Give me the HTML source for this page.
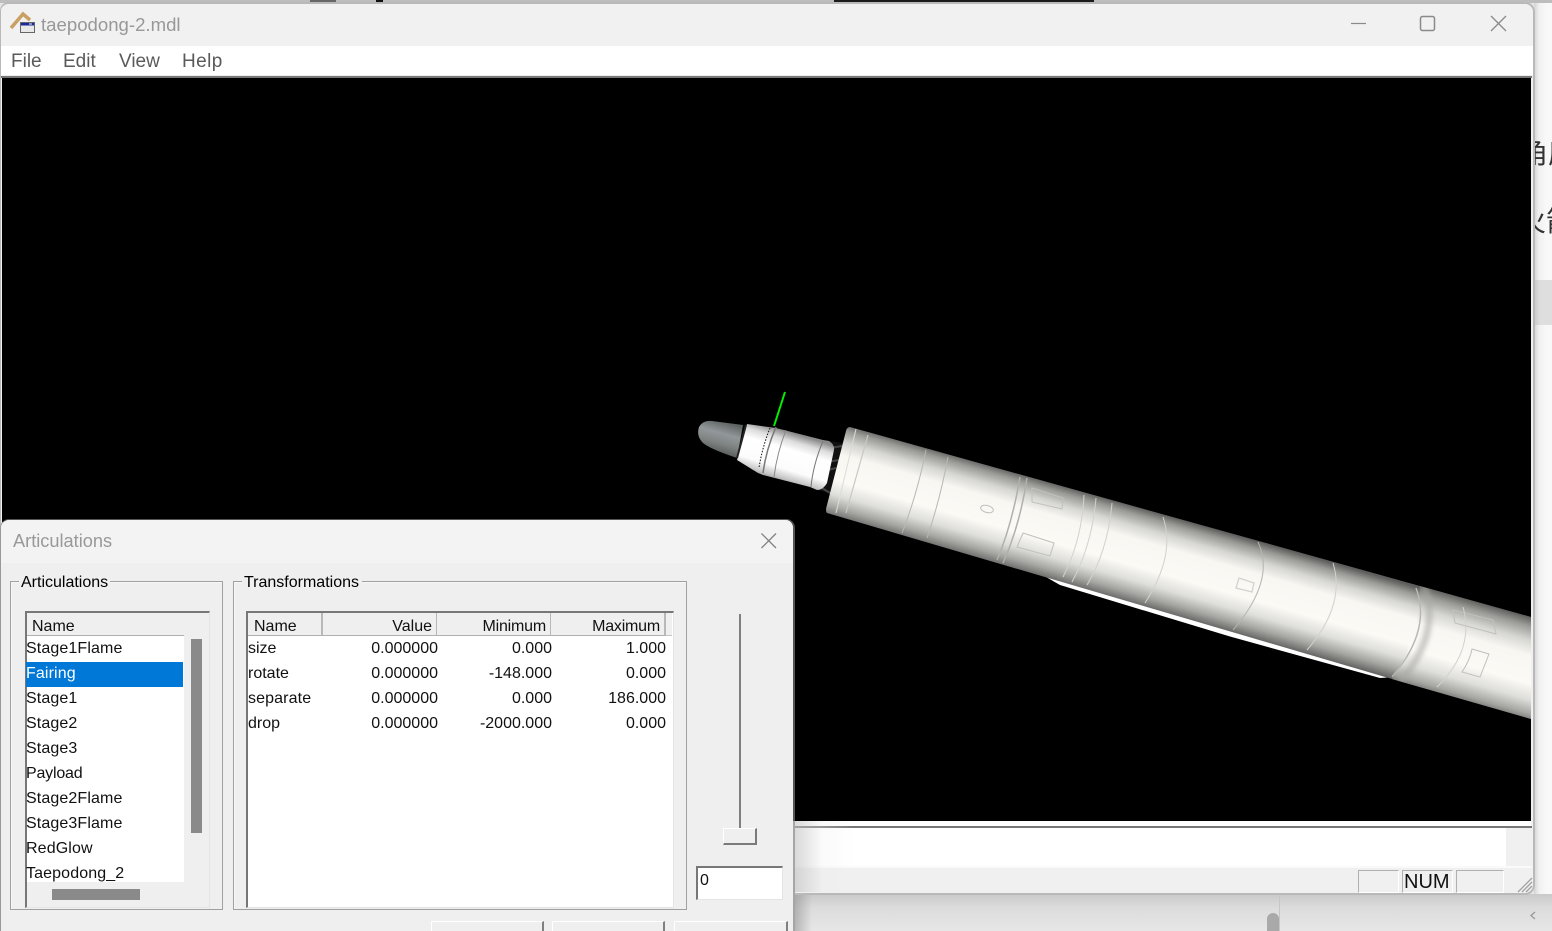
<!DOCTYPE html>
<html><head><meta charset="utf-8"><style>
html,body{margin:0;padding:0;width:1552px;height:931px;overflow:hidden;background:#e6e6e6}
*{box-sizing:border-box}
body{font-family:"Liberation Sans","Noto Sans CJK SC",sans-serif;position:relative}
.a{position:absolute}
.t{position:absolute;white-space:nowrap;font-size:16px;line-height:20px;color:#111}
.r{text-align:right}
.i{letter-spacing:.12px}
.h{letter-spacing:-.2px}
.group{position:absolute;border:1px solid #a0a0a0;box-shadow:inset 1px 1px 0 #f6f6f6}
.list{position:absolute;border-top:2px solid #777;border-left:2px solid #777;border-right:1px solid #e4e4e4;border-bottom:1px solid #e4e4e4;background:#efefef}
.btn{position:absolute;top:921px;height:12px;background:#efefef;border-top:1px solid #fff;border-left:1px solid #fff;border-right:2px solid #808080}
.hd{position:absolute;top:613px;height:23px;background:#efefef;border-bottom:1px solid #b0b0b0;border-right:2px solid #b8b8b8}
.stat{position:absolute;top:870px;height:23px;border:1px solid #b0b0b0;border-bottom-color:#fff;border-right-color:#fff}
</style></head><body>

<!-- desktop behind the window -->
<div class="a" style="left:1534px;top:0;width:18px;height:931px;background:linear-gradient(90deg,#d4d4d4,#f0f0f0 5px,#f8f8f8 12px)"></div>
<div class="a" style="left:1534px;top:280px;width:18px;height:45px;background:linear-gradient(90deg,#c8c8c8,#dedede 6px)"></div>
<div class="t" style="left:1520px;top:139px;font-size:28px;line-height:30px;color:#333">角度</div>
<div class="t" style="left:1518px;top:207px;font-size:28px;line-height:30px;color:#333">火箭</div>
<div class="a" style="left:794px;top:894px;width:758px;height:37px;background:linear-gradient(180deg,#c9c9c9,#dcdcdc 14px,#e6e6e6 36px)"></div>
<div class="a" style="left:794px;top:894px;width:18px;height:37px;background:linear-gradient(90deg,rgba(130,130,130,.5),rgba(130,130,130,0))"></div>
<div class="a" style="left:1279px;top:894px;width:1px;height:37px;background:#c6c6c6"></div>
<div class="a" style="left:1267px;top:913px;width:12px;height:24px;border-radius:6px;background:#a9a9a9"></div>
<svg class="a" style="left:1528px;top:910px" width="10" height="12"><path d="M7 2L3 5.500L7 9" fill="none" stroke="#999" stroke-width="1.300"/></svg>

<!-- top strip -->
<div class="a" style="left:0;top:0;width:1552px;height:3px;background:#bdbdbd"></div>
<div class="a" style="left:310px;top:0;width:26px;height:2px;background:#666"></div>
<div class="a" style="left:376px;top:0;width:7px;height:3px;background:#111"></div>
<div class="a" style="left:834px;top:0;width:260px;height:3px;background:#1c1c1c"></div>

<!-- main window -->
<div class="a" style="left:0;top:2px;width:1535px;height:893px;background:#f0f0f0;border:2px solid #b9b9b9;border-left-width:1px;border-radius:9px 10px 10px 0"></div>
<div class="a" style="left:1px;top:4px;width:1532px;height:42px;background:#f1f1f1;border-radius:8px 8px 0 0"></div>
<div class="a" style="left:1px;top:46px;width:1532px;height:29px;background:#fff"></div>
<div class="a" style="left:1px;top:75px;width:1532px;height:2px;background:#eee"></div>
<div class="a" style="left:1px;top:76px;width:1531px;height:2px;background:#777"></div>

<svg class="a" style="left:8px;top:8px" width="30" height="28" viewBox="0 0 30 28">
<path d="M3 20L15 6L22 12" fill="none" stroke="#c9a063" stroke-width="3.500"/>
<rect x="12.500" y="14.500" width="14" height="10" fill="#e8e8e8" stroke="#666" stroke-width="1"/>
<rect x="13" y="15" width="13" height="2.500" fill="#1a2a9a"/>
<rect x="21" y="15.500" width="3" height="1" fill="#eee"/>
</svg>
<div class="t" style="left:41px;top:14px;font-size:18.6px;line-height:22px;color:#989898">taepodong-2.mdl</div>
<div class="t" style="left:11px;top:51px;font-size:19px;line-height:22px;color:#5a5a5a">File</div>
<div class="t" style="left:63px;top:51px;font-size:19px;line-height:22px;color:#5a5a5a">Edit</div>
<div class="t" style="left:119px;top:51px;font-size:19px;line-height:22px;color:#5a5a5a">View</div>
<div class="t" style="left:182px;top:51px;font-size:19px;line-height:22px;letter-spacing:.4px;color:#5a5a5a">Help</div>

<svg class="a" style="left:1340px;top:8px" width="180" height="30" fill="none" stroke="#8a8a8a" stroke-width="1.200">
<path d="M11 15.500H26"/>
<rect x="80.500" y="8.500" width="14" height="14" rx="2" stroke-width="1.500"/>
<path d="M151 8L166 23M166 8L151 23" stroke-width="1.300"/>
</svg>

<!-- black view -->
<div class="a" style="left:2px;top:78px;width:1529px;height:743px;background:#000"></div>

<!-- rocket -->
<svg class="a" style="left:0;top:0" width="1552" height="931" viewBox="0 0 1552 931">
<defs>
<linearGradient id="b" gradientUnits="userSpaceOnUse" x1="1190" y1="522" x2="1163.600" y2="614">
<stop offset="0" stop-color="#5e5e5c"/><stop offset=".08" stop-color="#9b9b98"/><stop offset=".2" stop-color="#d6d6d2"/><stop offset=".33" stop-color="#f8f7f2"/><stop offset=".6" stop-color="#fbfaf5"/><stop offset=".75" stop-color="#dededa"/><stop offset=".88" stop-color="#a5a5a2"/><stop offset="1" stop-color="#5e5e5c"/>
</linearGradient>
<linearGradient id="b2" gradientUnits="userSpaceOnUse" x1="1490" y1="605" x2="1461" y2="705">
<stop offset="0" stop-color="#5c5c5a"/><stop offset=".09" stop-color="#9b9b98"/><stop offset=".22" stop-color="#d6d6d2"/><stop offset=".36" stop-color="#f8f7f2"/><stop offset=".62" stop-color="#fbfaf5"/><stop offset=".77" stop-color="#dededa"/><stop offset=".9" stop-color="#a5a5a2"/><stop offset="1" stop-color="#5c5c5a"/>
</linearGradient>
<linearGradient id="f" gradientUnits="userSpaceOnUse" x1="792" y1="433" x2="777" y2="483">
<stop offset="0" stop-color="#8c8c8c"/><stop offset=".15" stop-color="#dcdcdc"/><stop offset=".32" stop-color="#fff"/><stop offset=".7" stop-color="#fcfcfc"/><stop offset=".88" stop-color="#c4c4c4"/><stop offset="1" stop-color="#777"/>
</linearGradient>
<linearGradient id="n" gradientUnits="userSpaceOnUse" x1="728" y1="423" x2="719" y2="455">
<stop offset="0" stop-color="#5f6463"/><stop offset=".35" stop-color="#92979a"/><stop offset=".65" stop-color="#7f8482"/><stop offset="1" stop-color="#535857"/>
</linearGradient>
<filter id="bl" x="-30%" y="-10%" width="160%" height="120%"><feGaussianBlur stdDeviation="2"/></filter>
</defs>
<path d="M774 426L785 392" stroke="#00f000" stroke-width="2" fill="none"/>
<path d="M743 425L712 421Q703 420 699 427Q696 436 703 443Q710 449 737 458Z" fill="url(#n)"/>
<path d="M824 440L848 444L832 494L818 490Z" fill="#111"/>
<path d="M830 448L842 446M826 462L840 460M822 488L830 493M828 470L836 468" stroke="#444" stroke-width="2" fill="none"/>
<path d="M747 424L776 428L823 440L829 441Q835 445 834 450L827 483Q823 490 817 490L810 487L763 475L758 473L737 460Z" fill="url(#f)"/>
<path d="M746 425L737 458" stroke="#222" stroke-width="2" fill="none"/>
<path d="M770 428Q762 448 759 468" stroke="#111" stroke-width="1" stroke-dasharray="1.500 1.500" fill="none"/>
<path d="M776 427Q766 450 763 473" stroke="#777" stroke-width="1.500" fill="none"/>
<path d="M786 430Q777 453 774 477" stroke="#888" stroke-width="1" fill="none"/>
<path d="M823 441Q813 465 811 487" stroke="#777" stroke-width="1" fill="none"/>

<!-- white sliver -->
<path d="M1046 577L1388 676L1388 677.500L1380 678L1230 636.500L1060 585Z" fill="#fff"/>
<!-- main body -->
<clipPath id="bodyclip"><path d="M850 427L1420 586L1531 617V719L1392 679L827 513Q825 511 827 505L846 431Q847 427 850 427Z"/></clipPath>
<path d="M850 427L1420 586L1531 617V719L1392 679L827 513Q825 511 827 505L846 431Q847 427 850 427Z" fill="url(#b)"/>
<path d="M1420 586L1531 617V719L1392 679Q1420 640 1420 586Z" fill="url(#b2)"/>
<!-- ring band -->
<g clip-path="url(#bodyclip)">
<path d="M1424 586Q1442 632 1400 682" fill="none" stroke="#a8a8a4" stroke-width="7" opacity=".55" filter="url(#bl)"/>
</g>
<g fill="none" stroke="#b8b8b4" stroke-width="1">
<path d="M856 429L836 513" stroke="#dcdcd8"/>
<path d="M868 435L846 513" stroke="#c8c8c4" stroke-width="1.200"/>
<path d="M926 450Q917 495 902 533"/>
<path d="M948 457Q940 500 927 538"/>
<path d="M1020 477Q1012 525 997 560" stroke-width="1.500" stroke="#b0b0ac"/>
<path d="M1027 478Q1020 525 1003 563" stroke-width="1.500" stroke="#b0b0ac"/>
<path d="M1084 495Q1082 540 1063 577" stroke="#d2d2ce"/>
<path d="M1096 498Q1092 545 1072 582" stroke="#d2d2ce"/>
<path d="M1112 503Q1108 550 1087 585" stroke="#d2d2ce"/>
<path d="M1163 517Q1176 555 1145 603" stroke="#d2d2ce"/>
<path d="M1258 542Q1276 580 1233 630" stroke="#b4b4b0"/>
<path d="M1333 563Q1346 605 1307 650" stroke="#d2d2ce"/>
<path d="M1416 588Q1432 630 1392 677" stroke="#b8b8b4" stroke-width="1.500"/>
<path d="M1463 607Q1475 650 1437 687" stroke="#d2d2ce"/>
<path d="M1453 610L1493 620L1496 634L1455 623Z" stroke="#c0c0bc"/>
<path d="M1472 649L1489 654L1480 677L1462 672Q1470 660 1472 649Z" stroke="#c0c0bc"/>
<path d="M1239 578L1254 583L1252 592L1236 588Z" stroke="#d2d2ce" stroke-width="1.300"/>
<path d="M1032 488L1063 498L1062 509L1032 502Z" stroke="#c0c0bc"/>
<path d="M1023 533L1054 543L1050 556L1017 547Z" stroke="#c0c0bc"/>
<ellipse cx="987" cy="509" rx="6.500" ry="3.500" transform="rotate(15 987 509)" stroke="#c0c0bc"/>
</g>
</svg>

<!-- lower window region -->
<div class="a" style="left:2px;top:821px;width:1529px;height:5px;background:#fff"></div>
<div class="a" style="left:2px;top:826px;width:1530px;height:2px;background:#777"></div>
<div class="a" style="left:2px;top:828px;width:1504px;height:38px;background:#fff"></div>
<div class="a" style="left:1506px;top:828px;width:26px;height:38px;background:#f0f0f0"></div>
<div class="a" style="left:2px;top:866px;width:1530px;height:2px;background:#fafafa"></div>
<div class="a" style="left:794px;top:821px;width:60px;height:71px;background:linear-gradient(90deg,rgba(190,190,190,.6),rgba(235,235,235,.25) 28px,rgba(240,240,240,0))"></div>
<div class="stat" style="left:1358px;width:41px"></div>
<div class="stat" style="left:1402px;width:51px"></div>
<div class="stat" style="left:1456px;width:48px"></div>
<div class="t" style="left:1404px;top:871px;font-size:20px;line-height:23px;color:#111">NUM</div>
<svg class="a" style="left:1516px;top:876px" width="18" height="18" stroke="#a0a0a0" stroke-width="1.300" fill="none"><path d="M2 16L16 2M6 16L16 6M10 16L16 10"/></svg>

<!-- dialog -->
<div class="a" style="left:0;top:519px;width:795px;height:420px;background:#efefef;border:1px solid #555;border-right-width:2px;border-left-color:#999;border-radius:9px 9px 0 0"></div>
<div class="a" style="left:793px;top:821px;width:2px;height:110px;background:#a6a6a6"></div>
<div class="a" style="left:1px;top:520px;width:792px;height:43px;background:#f3f3f3;border-radius:8px 8px 0 0"></div>
<div class="t" style="left:13px;top:530px;font-size:18.2px;line-height:22px;color:#999">Articulations</div>
<svg class="a" style="left:758px;top:530px" width="22" height="22" fill="none" stroke="#808080" stroke-width="1.300"><path d="M3.500 3.500L18 18M18 3.500L3.500 18"/></svg>

<!-- Articulations group -->
<div class="group" style="left:10px;top:581px;width:213px;height:329px"></div>
<div class="a" style="left:19px;top:574px;width:91px;height:14px;background:#efefef"></div>
<div class="t" style="left:21px;top:573px;color:#000">Articulations</div>
<div class="list" style="left:25px;top:611px;width:185px;height:297px"></div>
<div class="hd" style="left:27px;width:157px;border-right:0"></div>
<div class="t" style="left:32px;top:617px">Name</div>
<div class="a" style="left:27px;top:636px;width:157px;height:246px;background:#fff"></div>
<div class="a" style="left:26px;top:662px;width:157px;height:25px;background:#0078d7"></div>
<div class="t i" style="left:26px;top:639px">Stage1Flame</div>
<div class="t i" style="left:26px;top:664px;color:#fff">Fairing</div>
<div class="t i" style="left:26px;top:689px">Stage1</div>
<div class="t i" style="left:26px;top:714px">Stage2</div>
<div class="t i" style="left:26px;top:739px">Stage3</div>
<div class="t i" style="left:26px;top:764px;letter-spacing:-.2px">Payload</div>
<div class="t i" style="left:26px;top:789px">Stage2Flame</div>
<div class="t i" style="left:26px;top:814px">Stage3Flame</div>
<div class="t i" style="left:26px;top:839px">RedGlow</div>
<div class="a" style="left:26px;top:864px;width:157px;height:18px;overflow:hidden"><div class="t i" style="left:0;top:0">Taepodong_2</div></div>
<div class="a" style="left:191px;top:639px;width:11px;height:194px;background:#8a8a8a"></div>
<div class="a" style="left:52px;top:889px;width:88px;height:11px;background:#8a8a8a"></div>

<!-- Transformations group -->
<div class="group" style="left:233px;top:581px;width:454px;height:329px"></div>
<div class="a" style="left:242px;top:574px;width:120px;height:14px;background:#efefef"></div>
<div class="t" style="left:244px;top:573px;color:#000">Transformations</div>
<div class="list" style="left:246px;top:611px;width:428px;height:297px;background:#fff"></div>
<div class="a" style="left:248px;top:613px;width:424px;height:23px;background:#efefef;border-bottom:1px solid #c4c4c4"></div>
<div class="hd" style="left:248px;width:75px"></div>
<div class="hd" style="left:323px;width:115px"></div>
<div class="hd" style="left:437px;width:115px"></div>
<div class="hd" style="left:551px;width:115px"></div>
<div class="t" style="left:254px;top:617px">Name</div>
<div class="t r" style="left:332px;top:617px;width:100px">Value</div>
<div class="t r h" style="left:446px;top:617px;width:100px">Minimum</div>
<div class="t r h" style="left:560px;top:617px;width:100px">Maximum</div>

<div class="t" style="left:248px;top:639px">size</div>
<div class="t" style="left:248px;top:664px">rotate</div>
<div class="t i" style="left:248px;top:689px">separate</div>
<div class="t" style="left:248px;top:714px">drop</div>
<div class="t r" style="left:338px;top:639px;width:100px">0.000000</div>
<div class="t r" style="left:338px;top:664px;width:100px">0.000000</div>
<div class="t r" style="left:338px;top:689px;width:100px">0.000000</div>
<div class="t r" style="left:338px;top:714px;width:100px">0.000000</div>
<div class="t r" style="left:452px;top:639px;width:100px">0.000</div>
<div class="t r" style="left:452px;top:664px;width:100px">-148.000</div>
<div class="t r" style="left:452px;top:689px;width:100px">0.000</div>
<div class="t r" style="left:452px;top:714px;width:100px">-2000.000</div>
<div class="t r" style="left:566px;top:639px;width:100px">1.000</div>
<div class="t r" style="left:566px;top:664px;width:100px">0.000</div>
<div class="t r" style="left:566px;top:689px;width:100px">186.000</div>
<div class="t r" style="left:566px;top:714px;width:100px">0.000</div>

<!-- slider -->
<div class="a" style="left:739px;top:614px;width:2px;height:214px;background:#808080"></div>
<div class="a" style="left:723px;top:828px;width:34px;height:17px;background:#efefef;border-top:1px solid #fff;border-left:1px solid #fff;border-right:2px solid #7a7a7a;border-bottom:2px solid #7a7a7a"></div>
<div class="a" style="left:696px;top:866px;width:87px;height:34px;background:#fff;border-top:2px solid #777;border-left:2px solid #777;border-right:1px solid #e4e4e4;border-bottom:1px solid #e4e4e4"></div>
<div class="t" style="left:700px;top:871px">0</div>

<!-- bottom buttons -->
<div class="btn" style="left:431px;width:113px"></div>
<div class="btn" style="left:552px;width:113px"></div>
<div class="btn" style="left:674px;width:114px"></div>
</body></html>
